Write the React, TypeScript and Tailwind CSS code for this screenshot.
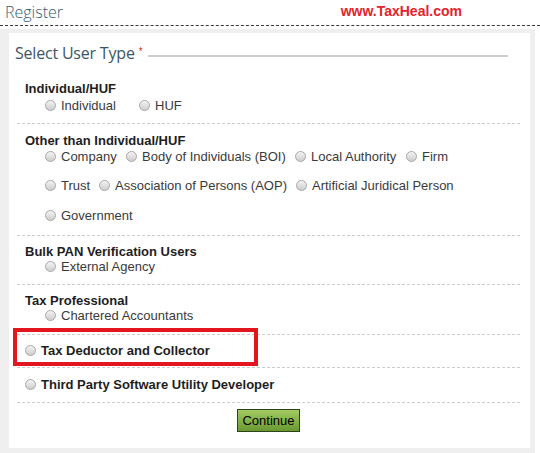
import React from "react";

function Radio() {
  return (
    <span className="inline-block w-[11px] h-[11px] shrink-0 rounded-full border border-[#a8a8a8] bg-gradient-to-b from-[#f4f4f4] to-[#cdcdcd]" />
  );
}

function Opt({ label, w }: { label: string; w?: string }) {
  return (
    <div className={"flex items-center shrink-0 " + (w ?? "")}>
      <Radio />
      <span className="ml-[5px] whitespace-nowrap">{label}</span>
    </div>
  );
}

export default function App() {
  return (
    <div className="w-[540px] h-[453px] bg-white overflow-hidden font-['Liberation_Sans',Arial,sans-serif] text-[13px] leading-[15px] text-[#3a3a3a]">
      {/* header */}
      <div className="h-[26px] border-b border-dashed border-[#3a3a3a] flex items-start justify-between pl-[5px]">
        <span className="mt-[2px] text-[16px] leading-[20px] font-['Open_Sans',sans-serif] font-light text-[#2f5b74]">
          Register
        </span>
        <span className="mt-[3px] mr-[78px] text-[14px] leading-[16px] font-bold text-[#e3232b]">
          www.TaxHeal.com
        </span>
      </div>

      {/* gray panel */}
      <div className="mt-[3px] w-[535px] h-[424px] bg-[#efefef] pl-[9px] pt-[4px] pr-[5px] pb-[5px]">
        <div className="relative h-full bg-white">
          {/* title */}
          <div className="flex items-center pt-[10px] pl-[6px] pr-[22px]">
            <span className="text-[16px] leading-[20px] font-['Open_Sans',sans-serif] tracking-[-0.2px] text-[#3d5566]">
              Select User Type
            </span>
            <span className="ml-[4px] text-[10px] leading-[10px] text-[#c0392b] -mt-[2px]">*</span>
            <div className="flex-1 h-[2px] bg-[#cdcdcd] ml-[5px] mt-[5px]" />
          </div>

          {/* sections */}
          <div className="mt-[10px] pl-[8px] pr-[10px]">
            <div className="pt-[8px] pb-[10px] border-b border-dashed border-[#cccccc]">
              <div className="pl-[8px] font-bold text-[#1e1e1e]">Individual/HUF</div>
              <div className="mt-[2px] pl-[28px] flex">
                <Opt label="Individual" w="w-[94px]" />
                <Opt label="HUF" />
              </div>
            </div>

            <div className="pt-[9px] pb-[12px] border-b border-dashed border-[#cccccc]">
              <div className="pl-[8px] font-bold text-[#1e1e1e]">Other than Individual/HUF</div>
              <div className="mt-[1px] pl-[28px] flex flex-col">
                <div className="flex">
                  <Opt label="Company" w="w-[81px]" />
                  <Opt label="Body of Individuals (BOI)" w="w-[169px]" />
                  <Opt label="Local Authority" w="w-[111px]" />
                  <Opt label="Firm" />
                </div>
                <div className="flex mt-[14px]">
                  <Opt label="Trust" w="w-[54px]" />
                  <Opt label="Association of Persons (AOP)" w="w-[197px]" />
                  <Opt label="Artificial Juridical Person" />
                </div>
                <div className="flex mt-[15px]">
                  <Opt label="Government" />
                </div>
              </div>
            </div>

            <div className="pt-[8px] pb-[10px] border-b border-dashed border-[#cccccc]">
              <div className="pl-[8px] font-bold text-[#1e1e1e]">Bulk PAN Verification Users</div>
              <div className="pl-[28px] flex">
                <Opt label="External Agency" />
              </div>
            </div>

            <div className="pt-[8px] pb-[11px] border-b border-dashed border-[#cccccc]">
              <div className="pl-[8px] font-bold text-[#1e1e1e]">Tax Professional</div>
              <div className="pl-[28px] flex">
                <Opt label="Chartered Accountants" />
              </div>
            </div>

            <div className="pt-[8px] pb-[9px] pl-[8px] border-b border-dashed border-[#cccccc] font-bold text-[#1e1e1e]">
              <Opt label="Tax Deductor and Collector" />
            </div>

            <div className="pt-[9px] pb-[10px] pl-[8px] border-b border-dashed border-[#cccccc] font-bold text-[#1e1e1e]">
              <Opt label="Third Party Software Utility Developer" />
            </div>

            <div className="pt-[6px] flex justify-center">
              <button className="h-[23px] px-[4px] border border-[#2c4416] bg-gradient-to-b from-[#a2cb62] to-[#6a9830] text-[13px] leading-[15px] text-black font-['Liberation_Sans',Arial,sans-serif]">
                Continue
              </button>
            </div>
          </div>

          {/* red annotation box */}
          <div className="absolute left-[4px] top-[295px] w-[245px] h-[38px] border-[4px] border-[#e3161f] pointer-events-none" />
        </div>
      </div>
    </div>
  );
}
